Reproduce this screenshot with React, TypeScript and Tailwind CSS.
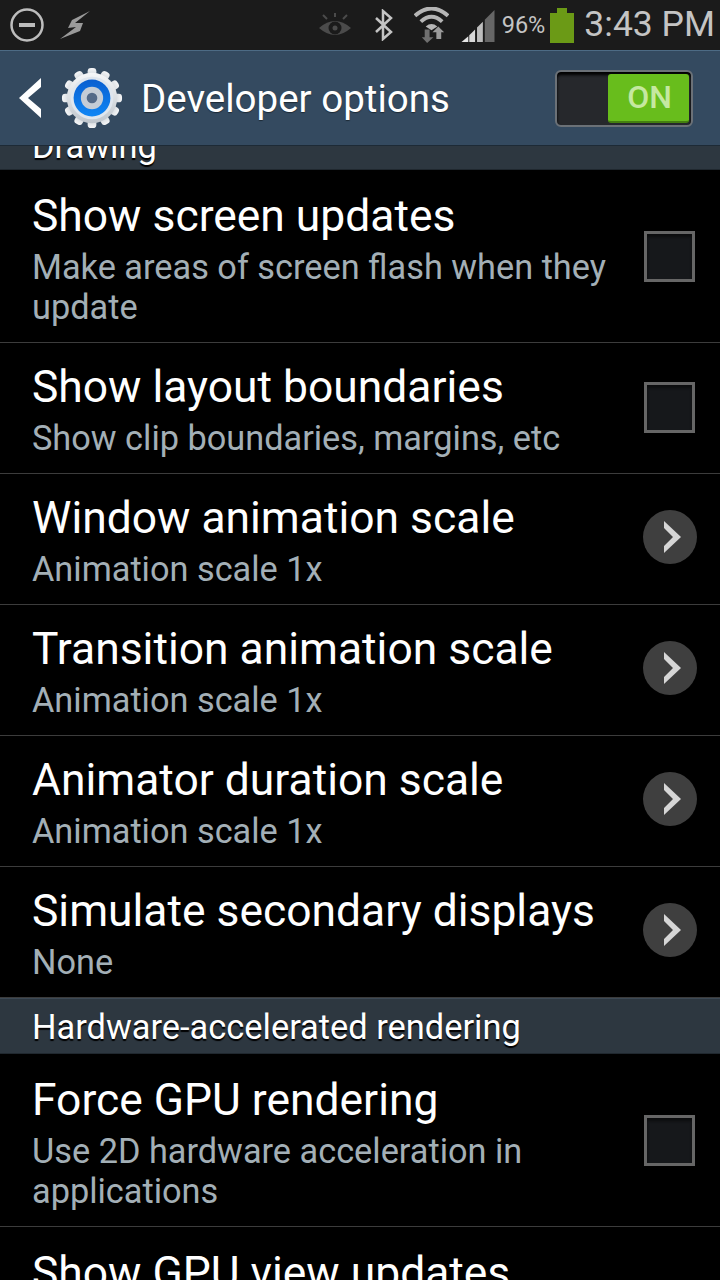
const font = "font-['Roboto',sans-serif]";

type RowProps = {
  title: string;
  summary: string[];
  control: "check" | "arrow";
  height: string;
};

const Checkbox = () => (
  <div className="h-[51px] w-[51px] border-[3px] border-[#666] bg-[#16181b] shadow-[inset_0_3px_3px_#0c0d0e]"></div>
);

const ArrowButton = () => (
  <div className="mb-[2px] mr-[-1px] flex h-[54px] w-[54px] items-center justify-center rounded-full bg-[#3f3f3f]">
    <svg width="20" height="34" viewBox="0 0 20 34" className="ml-[3px]">
      <path d="M2 1 L19 17 L2 33 L2 26 L11 17 L2 8 Z" fill="#d6d6d6" />
    </svg>
  </div>
);

const Row = ({ title, summary, control, height }: RowProps) => (
  <div
    className={`flex items-center justify-between border-b border-[#3c3c3c] pl-[32px] pr-[24px] ${height}`}
  >
    <div className="flex flex-col pt-[6px]">
      <div className="mb-[7px] h-[48px] whitespace-nowrap text-[44.4px] leading-[48px] text-white">
        {title}
      </div>
      {summary.map((line) => (
        <div
          key={line}
          className="h-[40px] whitespace-nowrap text-[34.3px] leading-[40px] text-[#a3afb6]"
        >
          {line}
        </div>
      ))}
    </div>
    {control === "check" ? (
      <div className="mr-[1px]">
        <Checkbox />
      </div>
    ) : (
      <ArrowButton />
    )}
  </div>
);

const GearIcon = () => {
  const teeth = Array.from({ length: 12 }, (_, i) => i * 30);
  return (
    <svg width="62" height="62" viewBox="0 0 64 64">
      <defs>
        <linearGradient id="gear" x1="0" y1="0" x2="0" y2="1">
          <stop offset="0" stopColor="#f6f7f8" />
          <stop offset="1" stopColor="#bfc6cd" />
        </linearGradient>
        <linearGradient id="ring" x1="0" y1="0" x2="0" y2="1">
          <stop offset="0" stopColor="#0a5fd0" />
          <stop offset="1" stopColor="#0f86f5" />
        </linearGradient>
      </defs>
      {teeth.map((a) => (
        <rect
          key={a}
          x="27.5"
          y="1"
          width="9"
          height="12"
          rx="3.5"
          fill="url(#gear)"
          transform={`rotate(${a} 32 32)`}
        />
      ))}
      <circle cx="32" cy="32" r="26" fill="url(#gear)" />
      <circle cx="32" cy="32" r="22" fill="#dfe6ee" />
      <circle cx="32" cy="32" r="19" fill="url(#ring)" />
      <circle cx="32" cy="32" r="11.5" fill="#c4ccd6" />
      <circle cx="32" cy="32" r="5.5" fill="#546a88" />
    </svg>
  );
};

const StatusBar = () => (
  <div className="flex h-[50px] items-center bg-[#1b1b1b] pl-[10px] pr-[5px]">
    <svg width="34" height="34" viewBox="0 0 34 34">
      <circle cx="17" cy="17" r="15.5" fill="none" stroke="#bdbdbd" strokeWidth="2.5" />
      <rect x="9" y="15" width="16" height="4" fill="#bdbdbd" />
    </svg>
    <svg width="31" height="29" viewBox="0 0 31 29" className="ml-[16px] blur-[0.6px]">
      <path d="M30 0 L12 9 L8 17 L16 16 L0 28 L20 20 L23 12 L15 12 Z" fill="#9a9a9a" />
    </svg>
    <div className="flex-1"></div>
    <svg width="32" height="25" viewBox="0 0 32 25" className="mr-[24px]">
      <path d="M0 15 Q16 1 32 15 Q16 29 0 15 Z" fill="#4b4b4b" />
      <circle cx="16" cy="15" r="6.5" fill="#1b1b1b" />
      <circle cx="16" cy="15" r="2.5" fill="#4b4b4b" />
      <path d="M16 0 V4 M4 2 L8 6 M28 2 L24 6" stroke="#4b4b4b" strokeWidth="2" />
    </svg>
    <svg width="18" height="32" viewBox="0 0 18 32" className="mr-[21px]">
      <path
        d="M1 9 L16 23 L8 30 V2 L16 9 L1 23"
        fill="none"
        stroke="#c4c4c4"
        strokeWidth="2.5"
      />
    </svg>
    <svg width="35" height="36" viewBox="0 0 36 37" className="mr-[12px]">
      <path d="M1 9 Q18 -6 35 9" fill="none" stroke="#b5b5b5" strokeWidth="4" />
      <path d="M7 15 Q18 5 29 15" fill="none" stroke="#b5b5b5" strokeWidth="4" />
      <path d="M12 20 Q18 15 24 20 L18 24 Z" fill="#b5b5b5" />
      <path d="M11 23 H16 V31 H20 L13.5 37 L8 31 H11 Z" fill="#6f6f6f" />
      <path d="M25 20 L31 26 H28 V33 H23 V26 H19 Z" fill="#9a9a9a" />
    </svg>
    <svg width="34" height="33" viewBox="0 0 34 34" className="mr-[7px] mt-[3px]">
      <path d="M0 33 L7 27 V33 Z" fill="#e6e6e6" />
      <path d="M8 26 L14 20 V33 H8 Z" fill="#d8d8d8" />
      <path d="M16 18 L22 12 V33 H16 Z" fill="#bdbdbd" />
      <path d="M24 10 L34 0 V33 H24 Z" fill="#666" />
    </svg>
    <span className="mr-[5px] mt-[1px] text-[23.5px] leading-none text-[#c4c4c4]">96%</span>
    <div className="mr-[10px] mt-[1px] flex flex-col items-center">
      <div className="h-[5px] w-[10px] bg-[#6b9a16]"></div>
      <div className="h-[30px] w-[24px] bg-[#6b9a16]"></div>
    </div>
    <span className="text-[35.5px] leading-none text-[#c4c4c4]">3:43 PM</span>
  </div>
);

const ActionBar = () => (
  <div className="relative z-10 flex h-[96px] items-center border-t border-b border-t-[#4d6b85] border-b-[#1d2a36] bg-[#344a60] pl-[19px] pr-[27px]">
    <svg width="22" height="40" viewBox="0 0 22 40">
      <path d="M22 0 V9 L9 20 L22 31 V40 L0 20 Z" fill="#fff" />
    </svg>
    <div className="ml-[20px] flex">
      <GearIcon />
    </div>
    <div className="ml-[18px] mt-[2px] flex-1 text-[38.5px] leading-none text-white [text-shadow:0_1px_1px_#1d2a36]">
      Developer options
    </div>
    <div className="flex h-[57px] w-[138px] justify-end rounded-[6px] border-[2px] border-[#6b7177] bg-[#26282c] p-[2px] shadow-[inset_0_3px_3px_#000]">
      <div className="flex w-[81px] items-center justify-center rounded-[3px] border-b-[2px] border-[#44800f] bg-[#68bd1c] pl-[2px] text-[32px] font-medium leading-none text-[#c5e8a0]">
        ON
      </div>
    </div>
  </div>
);

const SectionHeader = ({ label }: { label: string }) => (
  <div className="flex h-[56px] items-center border-t border-b border-t-[#3c4955] border-b-[#20282f] bg-[#2d3740] pl-[32px] pt-[2px] text-[34.4px] leading-none text-white [text-shadow:0_2px_1px_#000]">
    {label}
  </div>
);

export default function App() {
  return (
    <div className={`h-[1280px] w-[720px] overflow-hidden bg-black ${font}`}>
      <StatusBar />
      <ActionBar />
      <div className="flex h-[24px] items-end overflow-hidden border-b border-[#20282f] bg-[#2d3740] pl-[32px]">
        <div className="mb-[6px] text-[34.4px] leading-none text-white [text-shadow:0_2px_1px_#000]">
          Drawing
        </div>
      </div>
      <Row
        title="Show screen updates"
        summary={["Make areas of screen flash when they", "update"]}
        control="check"
        height="h-[173px]"
      />
      <Row
        title="Show layout boundaries"
        summary={["Show clip boundaries, margins, etc"]}
        control="check"
        height="h-[131px] pb-[2px]"
      />
      <Row
        title="Window animation scale"
        summary={["Animation scale 1x"]}
        control="arrow"
        height="h-[131px] pb-[2px]"
      />
      <Row
        title="Transition animation scale"
        summary={["Animation scale 1x"]}
        control="arrow"
        height="h-[131px] pb-[2px]"
      />
      <Row
        title="Animator duration scale"
        summary={["Animation scale 1x"]}
        control="arrow"
        height="h-[131px] pb-[2px]"
      />
      <Row
        title="Simulate secondary displays"
        summary={["None"]}
        control="arrow"
        height="h-[131px] pb-[2px]"
      />
      <SectionHeader label="Hardware-accelerated rendering" />
      <Row
        title="Force GPU rendering"
        summary={["Use 2D hardware acceleration in", "applications"]}
        control="check"
        height="h-[173px]"
      />
      <Row
        title="Show GPU view updates"
        summary={["Flash views inside windows when drawn", "with the GPU"]}
        control="check"
        height="h-[174px]"
      />
    </div>
  );
}
